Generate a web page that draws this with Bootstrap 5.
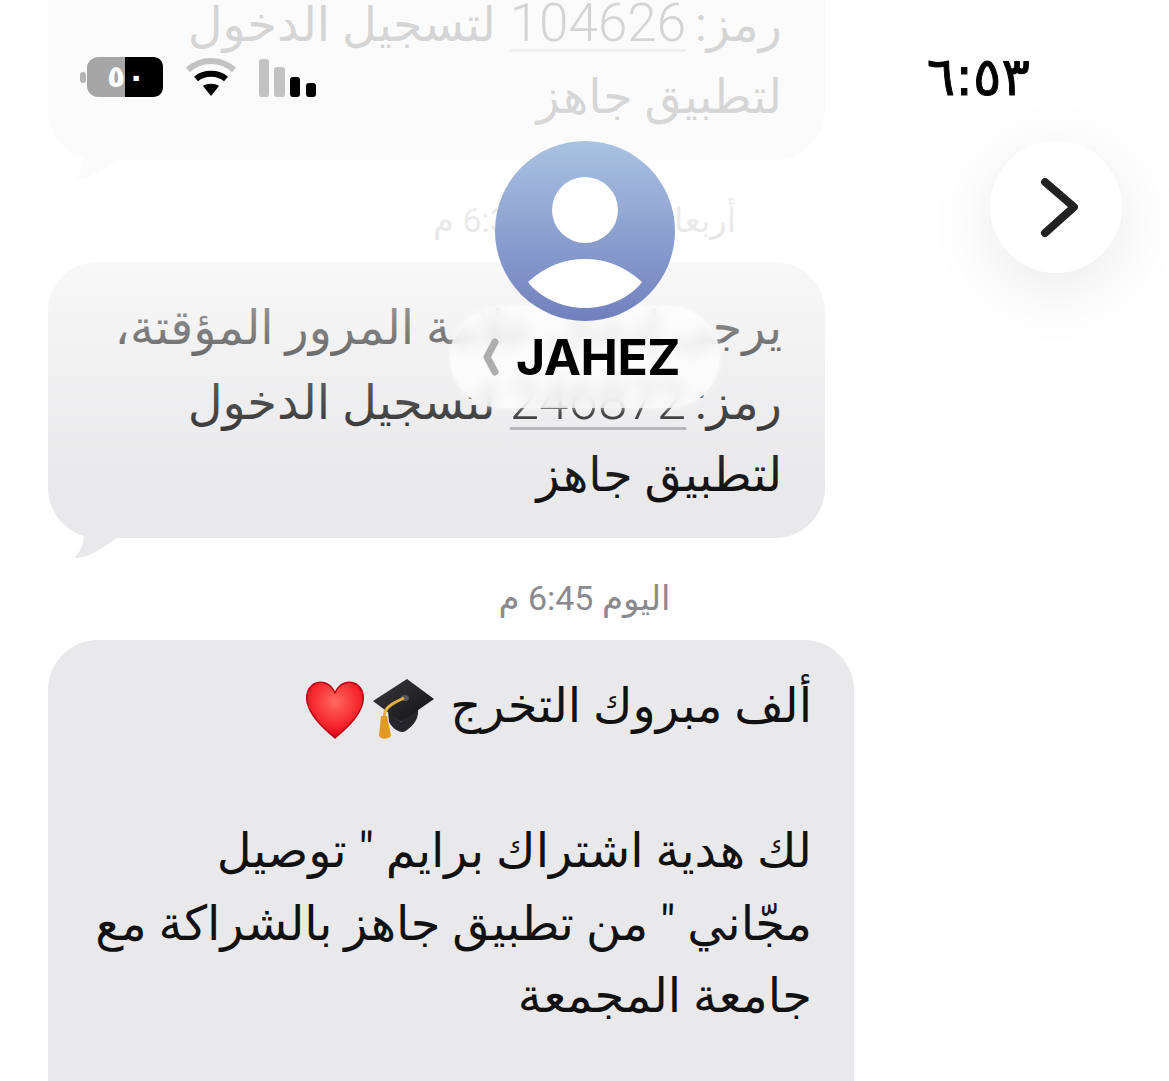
<!DOCTYPE html>
<html lang="ar">
<head>
  <meta charset="UTF-8">
  <title>JAHEZ</title>
  <meta name="viewport" content="width=device-width, initial-scale=1">
  <link href="https://cdn.jsdelivr.net/npm/bootstrap@5.3.6/dist/css/bootstrap.min.css" rel="stylesheet">
  <style>
    body { background: #fff; overflow: hidden; }
    .screen { width: 1169px; height: 1081px; overflow: hidden; font-family: Roboto, "DejaVu Sans", sans-serif; }
    .bubble { position: relative; background: #e9e9eb; border-radius: 50px; margin-left: 48px; width: 777px; height: 276px; padding: 30px 43px 0 10px; font-size: 48px; line-height: 72.5px; color: #111; white-space: nowrap; }
    .bubble-first { margin-top: -116px; }
    .bubble-big { width: 806px; height: 520px; padding-right: 42px; padding-top: 30px; }
    .tail { position: absolute; left: 0; bottom: -22px; width: 80px; height: 80px; }
    .code { text-decoration: underline; text-decoration-color: #a9a9ad; text-decoration-thickness: 3px; text-underline-offset: 8px; font-size: 53px; font-weight: 300; margin-right: -3px; margin-left: 2px; }
    .stamp { text-align: center; font-size: 34px; line-height: 40px; color: #8a8a8e; }
    .stamp-a { margin-top: 40px; margin-bottom: 22px; }
    .stamp-b { margin-top: 40px; margin-bottom: 22px; }
    .fade-top { position: absolute; left: 0; top: 0; width: 100%; height: 540px; background: linear-gradient(to bottom, rgba(255,255,255,.82) 0, rgba(255,255,255,.84) 220px, rgba(255,255,255,.4) 350px, rgba(255,255,255,0) 490px); pointer-events: none; }
    .status { position: absolute; left: 80px; top: 54px; width: 950px; }
    .clock { font-family: "DejaVu Sans", sans-serif; font-size: 53px; line-height: 46px; color: #000; -webkit-text-stroke: .9px #000; }
    .avatar { position: absolute; left: 495px; top: 141px; width: 180px; height: 180px; }
    .name-pill { position: absolute; left: 450px; top: 306px; width: 270px; height: 102px; border-radius: 51px; background: rgba(255,255,255,.74); backdrop-filter: blur(7px); box-shadow: 0 0 6px rgba(255,255,255,.6); padding-left: 32px; }
    .name-text { font-family: Inter, sans-serif; font-weight: 700; font-size: 50px; color: #000; letter-spacing: -.5px; }
    .next-btn { position: absolute; left: 990px; top: 141px; width: 132px; height: 132px; border-radius: 50%; background: #fff; box-shadow: 0 16px 70px rgba(0,0,0,.09); }
    .bat-digit { font-family: "DejaVu Sans", sans-serif; font-size: 30px; font-weight: 700; fill: #fff; }
    .status-icons { gap: 22px; }
    .emoji-cap { margin-left: -6px; margin-right: 3px; }
  </style>
</head>
<body>

<div class="screen position-relative">

  <!-- messages -->
  <div class="bubble bubble-first" dir="rtl">
    يرجى إدخال علامة المرور المؤقتة،<br>
    رمز: <span class="code">104626</span> لتسجيل الدخول<br>
    لتطبيق جاهز
    <svg class="tail" viewBox="0 0 80 80"><path fill="#e9e9eb" d="M2 0C5 20 14 32 22 40C32 48 38 52 35 63C33 70 29 74 27 78C40 78 52 70 70 57L80 57L80 0Z"/></svg>
  </div>

  <div class="stamp stamp-a" dir="rtl">أربعاء، 21 مايو 6:32 م</div>

  <div class="bubble" dir="rtl">
    يرجى إدخال علامة المرور المؤقتة،<br>
    رمز: <span class="code">246872</span> لتسجيل الدخول<br>
    لتطبيق جاهز
    <svg class="tail" viewBox="0 0 80 80"><path fill="#e9e9eb" d="M2 0C5 20 14 32 22 40C32 48 38 52 35 63C33 70 29 74 27 78C40 78 52 70 70 57L80 57L80 0Z"/></svg>
  </div>

  <div class="stamp stamp-b" dir="rtl">اليوم 6:45 م</div>

  <div class="bubble bubble-big" dir="rtl">
    ألف مبروك التخرج
    <svg width="64" height="62" viewBox="0 0 64 62" class="align-middle emoji-cap">
      <defs><linearGradient id="capFill" x1="0" y1="0" x2="1" y2="1"><stop offset="0" stop-color="#3a3a3e"/><stop offset="1" stop-color="#111114"/></linearGradient></defs>
      <path fill="#26262a" d="M17 33L18 44C24 54 32 56 36 52C44 46 48 40 47 30L30 44Z"/>
      <path fill="url(#capFill)" d="M2 23L36 1L63 21L30 44Z"/>
      <ellipse cx="34" cy="20" rx="4" ry="3" fill="#55555a"/>
      <path fill="none" stroke="#e0b040" stroke-width="3" d="M33 20C24 24 16 28 14 34L13 40"/>
      <path fill="#e09a20" d="M10 38L16 38L20 58C16 62 10 61 8 58Z"/>
    </svg>
    <svg width="60" height="60" viewBox="0 0 60 60" class="align-middle">
      <defs><radialGradient id="heartFill" cx=".5" cy=".35" r=".65"><stop offset="0" stop-color="#ff6a60"/><stop offset=".7" stop-color="#f5222a"/><stop offset="1" stop-color="#d4001c"/></radialGradient></defs>
      <path fill="url(#heartFill)" stroke="#b80018" stroke-width="1.5" d="M30 14C26 4 16 1 9 5C1 10 0 20 4 29C9 41 21 51 30 59C39 51 51 41 56 29C60 20 59 10 51 5C44 1 34 4 30 14Z"/>
    </svg>
    <br><br>
    لك هدية اشتراك برايم " توصيل<br>
    مجّاني " من تطبيق جاهز بالشراكة مع<br>
    جامعة المجمعة
  </div>

  <!-- header over the messages -->
  <div class="fade-top"></div>

  <div class="status d-flex justify-content-between align-items-center">
    <div class="d-flex align-items-center status-icons">
      <svg width="83" height="42" viewBox="0 0 83 42">
        <rect x="0" y="16" width="6" height="11" rx="3" fill="#b4b4b4"/>
        <path fill="#a6a6a6" d="M45 1H18C12 1 7 6 7 12V30C7 36 12 41 18 41H45Z"/>
        <path fill="#000" d="M45 1H73C79 1 83 5 83 11V31C83 37 79 41 73 41H45Z"/>
        <text class="bat-digit" x="27" y="31">٥</text>
        <text class="bat-digit" x="47" y="31">٠</text>
      </svg>
      <svg width="52" height="40" viewBox="0 0 52 40">
        <path fill="none" stroke="#c2c2c2" stroke-width="6" d="M3 13C16 1 36 1 49 13"/>
        <path fill="none" stroke="#000" stroke-width="6" d="M11 22C19 15 33 15 41 22"/>
        <path fill="#000" d="M18 29C22 26 30 26 34 29L26 39Z"/>
      </svg>
      <svg width="60" height="40" viewBox="0 0 60 40">
        <rect x="0" y="2" width="10" height="38" rx="3" fill="#c2c2c2"/>
        <rect x="15" y="10" width="11" height="30" rx="3" fill="#c2c2c2"/>
        <rect x="31" y="20" width="10" height="20" rx="3" fill="#000"/>
        <rect x="47" y="26" width="10" height="14" rx="3" fill="#000"/>
      </svg>
    </div>
    <div class="clock">٦:٥٣</div>
  </div>

  <div class="name-pill d-flex align-items-center gap-3">
    <svg width="18" height="38" viewBox="0 0 18 38"><path fill="none" stroke="#aeaeae" stroke-width="7" stroke-linecap="round" stroke-linejoin="round" d="M13 4L5 19L13 34"/></svg>
    <span class="name-text">JAHEZ</span>
  </div>

  <div class="avatar">
    <svg width="180" height="180" viewBox="0 0 180 180">
      <defs><linearGradient id="avatarFill" x1="0" y1="0" x2="0" y2="1"><stop offset="0" stop-color="#aac2e2"/><stop offset="1" stop-color="#7080bd"/></linearGradient></defs>
      <circle cx="90" cy="90" r="90" fill="url(#avatarFill)"/>
      <circle cx="90" cy="69" r="33" fill="#fff"/>
      <path fill="#fff" d="M33 141C50 125 70 118 90 118C110 118 130 125 147 141C135 157 112 167 90 167C68 167 45 157 33 141Z"/>
    </svg>
  </div>

  <div class="next-btn d-flex align-items-center justify-content-center">
    <svg width="44" height="64" viewBox="0 0 44 64"><path fill="none" stroke="#222" stroke-width="8" stroke-linecap="round" stroke-linejoin="round" d="M11 7L40 32L11 58"/></svg>
  </div>

</div>

<script src="https://cdn.jsdelivr.net/npm/bootstrap@5.3.6/dist/js/bootstrap.bundle.min.js"></script>
</body>
</html>
